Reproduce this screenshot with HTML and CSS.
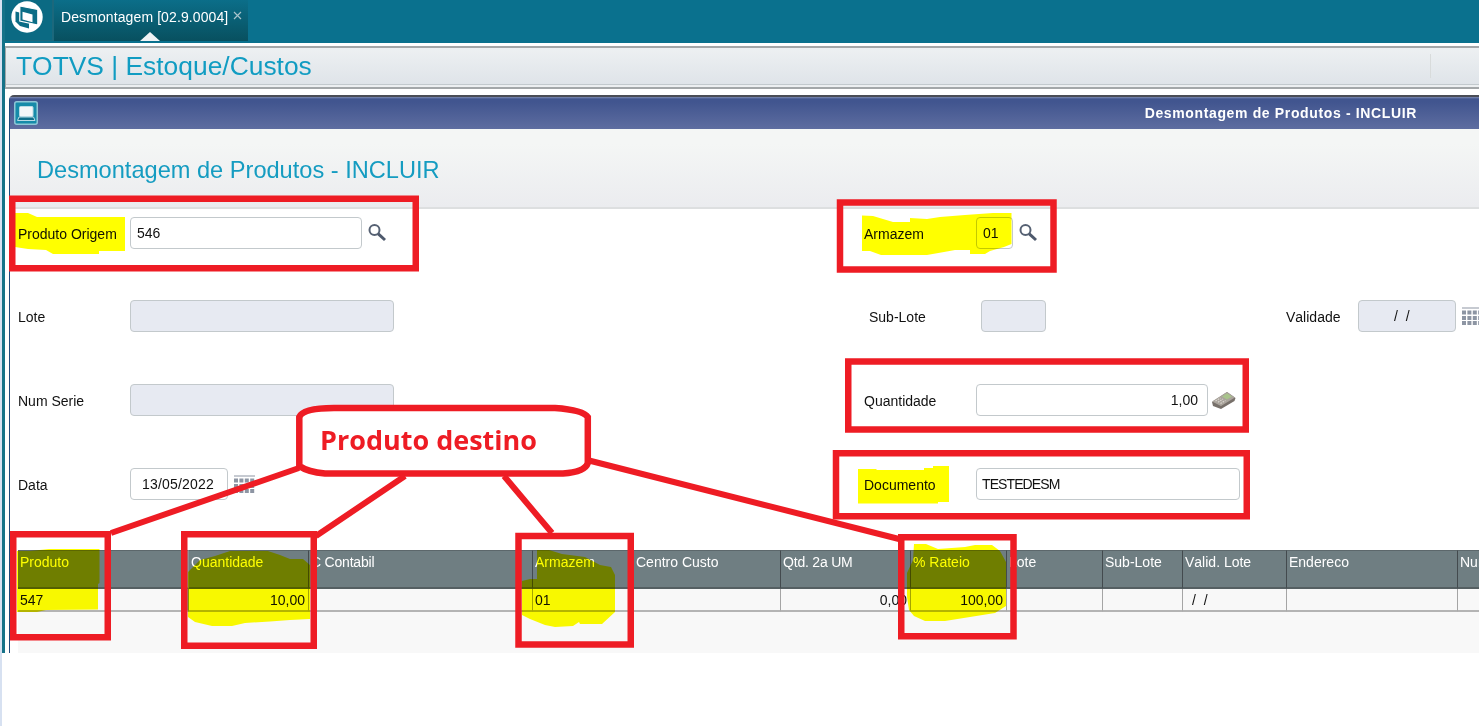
FILE: index.html
```html
<!DOCTYPE html>
<html lang="pt-BR">
  <head>
    <meta charset="UTF-8" />
    <meta name="viewport" content="width=device-width, initial-scale=1.0" />
    <title>Desmontagem de Produtos</title>
    <link rel="stylesheet" href="styles.css">
  </head>

  <body>
    <div class="app">
      <div class="topbar">
        <div class="logo">
          <svg width="32" height="32" viewBox="0 0 32 32">
            <circle cx="16" cy="16" r="15.7" fill="#fff" />
            <path d="M4.500 10.500 L18 14 V27.500 L9 25 L4.500 20.500 Z" fill="#0b6d86" />
            <path d="M8.800 5 L26.800 8.500 V24 L8.800 20 Z" fill="#0b6d86" stroke="#fff" stroke-width="1.2" />
            <path d="M11.500 10.800 L21.500 13.500 V21.300 L11.500 18.600 Z" fill="#fff" />
          </svg>
        </div>
        <div class="tab">
          <span>Desmontagem [02.9.0004]</span><svg class="close" width="9" height="9" viewBox="0 0 9 9"><path d="M1 1 L8 8 M8 1 L1 8" stroke="#a9c3cb" stroke-width="1.2" /></svg>
        </div>
      </div>

      <div class="module">
        <h1>TOTVS | Estoque/Custos</h1>
        <span class="divider"></span>
      </div>

      <div class="window">
        <div class="titlebar">
          <svg class="winicon" width="24" height="24" viewBox="0 0 24 24">
            <rect x="0.75" y="0.75" width="22.500" height="22.500" rx="2" fill="#168ba9" stroke="#8fc6d6" stroke-width="1.5" />
            <rect x="5.500" y="5.500" width="13.500" height="10" rx="1" fill="#f3f6f8" stroke="#b9dbe5" />
            <path d="M5 16 H19.500 L21 19.500 H3.500 Z" fill="#0f6e8a" stroke="#b9dbe5" />
          </svg>
          <span class="wintitle">Desmontagem de Produtos - INCLUIR</span>
        </div>
        <div class="heading">
          <h2>Desmontagem de Produtos - INCLUIR</h2>
        </div>

        <div class="form">
          <div class="field">
            <label>Produto Origem</label>
            <div class="input w232">546</div>
            <svg class="lupa" width="20" height="20" viewBox="0 0 20 20"><circle cx="7.500" cy="7" r="5" fill="none" stroke="#566173" stroke-width="2" /><path d="M11.300 10.800 L18 17" stroke="#4e596c" stroke-width="3" /></svg>
          </div>
          <div class="field">
            <label>Armazem</label>
            <div class="input w37">01</div>
            <svg class="lupa" width="20" height="20" viewBox="0 0 20 20"><circle cx="7.500" cy="7" r="5" fill="none" stroke="#566173" stroke-width="2" /><path d="M11.300 10.800 L18 17" stroke="#4e596c" stroke-width="3" /></svg>
          </div>
          <div class="field"></div>

          <div class="field">
            <label>Lote</label>
            <div class="input off w264"></div>
          </div>
          <div class="field shift">
            <label>Sub-Lote</label>
            <div class="input off w65"></div>
          </div>
          <div class="field short">
            <label>Validade</label>
            <div class="input off w98 date">/&nbsp; /</div>
            <svg class="cal" width="21" height="18" viewBox="0 0 21 18"><path d="M0 1 H21" stroke="#8d95a3" /><path d="M0 5.500 H21 M0 11 H21 M0 16 H21" stroke="#8d95a3" stroke-width="4" stroke-dasharray="4 1.400" /></svg>
          </div>

          <div class="field">
            <label>Num Serie</label>
            <div class="input off w264"></div>
          </div>
          <div class="field">
            <label>Quantidade</label>
            <div class="input w232 num">1,00</div>
            <svg class="calc" width="25" height="19" viewBox="0 0 25 19">
              <path d="M1 11 L16 1 L24.500 7 L23.500 10 L10 18 L2 15 Z" fill="#77706a" />
              <path d="M1 10.500 L16 1 L24 6.500 L10 15 Z" fill="#aaa49c" />
              <path d="M11 5.500 L16 2.200 L21 5.500 L16 8.500 Z" fill="#a9c48c" />
              <path d="M4.500 10 L9.500 7 M7 11.200 L12 8 M9.500 12.500 L14.500 9.400" stroke="#d9d5cf" stroke-width="1.200" stroke-dasharray="1.600 1" />
            </svg>
          </div>
          <div class="field"></div>

          <div class="field">
            <label>Data</label>
            <div class="input w98 data">13/05/2022</div>
            <svg class="cal" width="21" height="18" viewBox="0 0 21 18"><path d="M0 1 H21" stroke="#8d95a3" /><path d="M0 5.500 H21 M0 11 H21 M0 16 H21" stroke="#8d95a3" stroke-width="4" stroke-dasharray="4 1.400" /></svg>
          </div>
          <div class="field">
            <label>Documento</label>
            <div class="input w264 doc">TESTEDESM</div>
          </div>
        </div>

        <div class="grid">
          <table>
            <colgroup>
              <col class="c171" /><col class="c120" /><col class="c224" /><col class="c101" />
              <col class="c147" /><col class="c130" /><col class="c96" /><col class="c96" />
              <col class="c80" /><col class="c104" /><col class="c171" /><col class="c60" />
            </colgroup>
            <thead>
              <tr>
                <th>Produto</th>
                <th>Quantidade</th>
                <th class="tight">C Contabil</th>
                <th>Armazem</th>
                <th>Centro Custo</th>
                <th class="tight">Qtd. 2a UM</th>
                <th>% Rateio</th>
                <th>Lote</th>
                <th>Sub-Lote</th>
                <th>Valid. Lote</th>
                <th>Endereco</th>
                <th>Num</th>
              </tr>
            </thead>
            <tbody>
              <tr>
                <td>547</td>
                <td class="num">10,00</td>
                <td></td>
                <td>01</td>
                <td></td>
                <td class="num">0,00</td>
                <td class="num">100,00</td>
                <td></td>
                <td></td>
                <td class="date">/&nbsp; /</td>
                <td></td>
                <td></td>
              </tr>
            </tbody>
          </table>
        </div>
      </div>
    </div>

    <!-- yellow marker -->
    <svg class="marks marker" width="1479" height="726" viewBox="0 0 1479 726">
      <path d="M15 213 H28 L37 217 H125 V251 H99 V254 H53 L46 250 L28 249 L15 247 Z" />
      <path d="M862 215.500 L873 216 L893 222 H910 V218 L927 219 L940 217 L965 215 L993 213 H1011.500 V244 L1004 247 L990 251 L985 254 H970 V250 H955 L944 252 L927 255 H881 L870 251 H862 Z" />
      <path d="M858 469 H876 L877 470 H924 V468 H933 V466 H949 V502 H938 V503.500 H858 Z" />
      <path d="M17 551 H30 L49 549 H99.500 V583 L98 584 V609.500 L46 610 L37 612 H17 Z" />
      <path d="M188 572 L200 560 L215 556 L230 551 H268 L280 555 L290 559 H303 L310 565 V619 L290 620 L270 621.500 L245 623 L232 626 H212 L195 622 L188 617 Z" />
      <path d="M537 550 H549 L562 554 L585 557 L600 565 L611 567 L615 575 V612 L602 624 H580 L579 622 L573 626 L555 627 L545 625 L530 619 L522 615 V581 L530 579 H537 Z" />
      <path d="M914 544 H926 L938 549 L965 547 L975 545 H992 L1000 551 L1006 562 V606 L995 613 L970 617 L945 621 H925 L914 616 L909 610 L907 597 V573 L913 560 Z" />
    </svg>

    <!-- red boxes and callout -->
    <svg class="marks red" width="1479" height="726" viewBox="0 0 1479 726">
      <rect x="12.250" y="198.750" width="403.500" height="69.500" />
      <rect x="840" y="202.500" width="213.500" height="67" />
      <rect x="848.250" y="361.500" width="397.500" height="68" />
      <rect x="836" y="453.250" width="410.750" height="63" />
      <rect x="13.250" y="534.250" width="94.500" height="103" />
      <rect x="184.250" y="534.250" width="129.500" height="111.500" />
      <rect x="518.500" y="536" width="112.250" height="108.500" />
      <rect x="901.250" y="537.250" width="112.250" height="99" />
      <path d="M299.300 417 Q303 408 334 408 H555 Q583 410 587.800 417 V463 Q585 472 563 473.500 H325 Q308 472 299.300 466 Z" fill="#fff" />
      <path d="M299 468 L111 533 M405 476 L316 536 M504 476 L552 533 M589 460.500 L899 539" stroke-width="6" />
      <text x="320" y="450" textLength="217" lengthAdjust="spacingAndGlyphs">Produto destino</text>
    </svg>
  </body>
</html>
```
FILE: styles.css
```css
* {
  padding: 0;
  margin: 0;
  box-sizing: border-box;
}

body {
  height: 726px;
  overflow: hidden;
  position: relative;
  border-left: 2px solid #d7e1f1;
  background-color: #fff;
  font-family: "Liberation Sans", Arial, Helvetica, sans-serif;
  font-size: 14px;
  font-kerning: none;
  color: #111;
}

.app {
  height: 653px;
  border-left: 3px solid #157288;
  overflow: hidden;
  background-color: #fff;
}

/* top bar */
.topbar {
  height: 43px;
  display: flex;
  background-color: #0a718e;
}

.logo {
  width: 49px;
  height: 41px;
  padding: 1px 0 0 6px;
  border-right: 2px solid #1c687c;
  border-bottom: 1px solid #1c687c;
  background-color: #0b6a83;
}

.tab {
  position: relative;
  width: 194px;
  height: 41px;
  padding: 9px 0 0 7px;
  display: flex;
  white-space: nowrap;
  letter-spacing: 0.1px;
  color: #fff;
  background: linear-gradient(#0b6e89, #08505f);
}

.tab::after {
  content: "";
  position: absolute;
  left: 86px;
  bottom: 0;
  border: 10px solid transparent;
  border-top: 0;
  border-bottom: 9px solid #f0f3f5;
}

.close {
  margin: 2px 0 0 5px;
}

/* module line */
.module {
  height: 43px;
  margin-top: 3px;
  display: flex;
  justify-content: space-between;
  border: 2px solid #a3a7a9;
  border-left-width: 1px;
  border-right: 0;
  background: linear-gradient(#edf0f2, #dfe4e9 36px, #c2c9cd 36px, #c2c9cd 37px, #eceff1 37px);
}

.module h1 {
  padding-left: 10px;
  font-size: 26.4px;
  font-weight: normal;
  line-height: 36px;
  color: #119cc2;
}

.divider {
  width: 1px;
  height: 24px;
  margin: 6px 48px 0 0;
  background-color: #d8dbdb;
}

/* window */
.window {
  height: 558px;
  margin: 6px 0 0 4px;
  border-left: 1px solid #1f4a7c;
  border-top: 2px solid #4a4d56;
  border-top-left-radius: 5px;
}

.titlebar {
  height: 32px;
  display: flex;
  align-items: center;
  justify-content: space-between;
  padding: 0 62px 0 4px;
  background: linear-gradient(#7d8ab2, #41558f 2px, #41558f 5px, #5e6da0);
}

.wintitle {
  font-weight: bold;
  letter-spacing: 0.64px;
  color: #fff;
}

.heading {
  height: 80px;
  border-bottom: 2px solid #dddfe0;
  background: linear-gradient(#f4f6f5, #f4f6f5 15px, #ebecef);
}

.heading h2 {
  padding-left: 27px;
  font-size: 23.600px;
  font-weight: normal;
  line-height: 82px;
  color: #159cc1;
}

/* form */
.form {
  height: 341px;
  padding: 8px 0 0 8px;
  display: grid;
  grid-template-columns: 846px 422px 1fr;
  grid-template-rows: 83px 84px 84px 84px;
  overflow: hidden;
}

.field {
  display: flex;
  align-items: flex-start;
}

.field label {
  width: 112px;
  flex-shrink: 0;
  line-height: 35px;
}

.short label {
  width: 72px;
}

.shift {
  padding-left: 5px;
}

.input {
  height: 32px;
  flex-shrink: 0;
  padding: 0 6px;
  line-height: 31px;
  border: 1px solid #c3c9cc;
  border-radius: 4px;
  background-color: #fff;
}

.off {
  background-color: #e7eaf2;
}

.w37 {
  width: 37px;
}

.w65 {
  width: 65px;
}

.w98 {
  width: 98px;
}

.w232 {
  width: 232px;
}

.w264 {
  width: 264px;
}

.num {
  text-align: right;
}

.input.num {
  padding-right: 9px;
}

.input.date {
  padding-left: 35px;
}

.input.data {
  padding-left: 11px;
  letter-spacing: 0.2px;
}

.input.doc {
  padding-left: 5px;
  letter-spacing: -0.9px;
}

.lupa {
  margin: 6px 0 0 5px;
}

.cal {
  flex-shrink: 0;
  margin: 7px 0 0 6px;
}

.calc {
  margin: 7px 0 0 3px;
}

/* items grid */
.grid {
  height: 103px;
  margin-left: 8px;
  overflow: hidden;
  background-color: #f8f8f8;
}

table {
  width: 1496px;
  table-layout: fixed;
  border-collapse: separate;
  border-spacing: 0;
}

th,
td {
  padding-left: 2px;
  vertical-align: top;
  white-space: nowrap;
}

th {
  height: 39px;
  padding-top: 3px;
  text-align: left;
  font-weight: normal;
  color: #fff;
  border-top: 1px solid #5c676b;
  border-bottom: 2px solid #555f62;
  border-right: 1px solid #434a4e;
  background-color: #6f7e82;
}

td {
  height: 23px;
  padding-top: 3px;
  border-right: 1px solid #a5a5a5;
  border-bottom: 2px solid #b4b4b4;
}

th.tight {
  letter-spacing: -0.2px;
}

td.num {
  padding-right: 3px;
}

td.date {
  padding-left: 9px;
}

th:first-child,
td:first-child {
  border-right: 2px solid #8a9397;
}

.c60 {
  width: 60px;
}

.c80 {
  width: 80px;
}

.c96 {
  width: 96px;
}

.c101 {
  width: 101px;
}

.c104 {
  width: 104px;
}

.c120 {
  width: 120px;
}

.c130 {
  width: 130px;
}

.c147 {
  width: 147px;
}

.c171 {
  width: 171px;
}

.c224 {
  width: 224px;
}

/* marks over the screen */
.marks {
  position: absolute;
  left: 0;
  top: 0;
  margin-left: -2px;
}

.marker {
  fill: #ff0;
  mix-blend-mode: multiply;
}

.red {
  fill: none;
  stroke: #ee1c24;
  stroke-width: 6.500px;
}

.red text {
  fill: #ee1c24;
  stroke: none;
  font-family: "Open Sans", "Noto Sans", sans-serif;
  font-size: 27px;
  font-weight: bold;
}
```
